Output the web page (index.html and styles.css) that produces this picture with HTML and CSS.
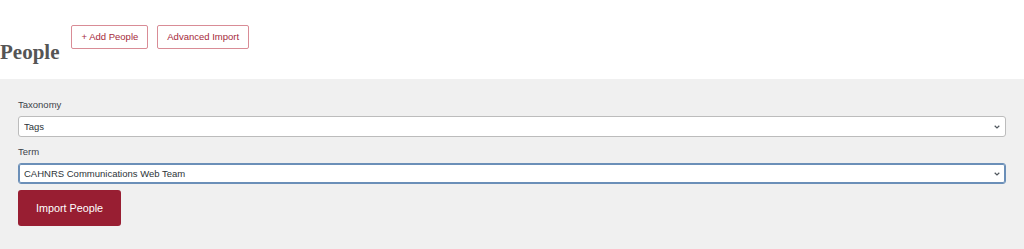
FILE: index.html
```html
<!DOCTYPE html>
<html>
<head>
  <title>People</title>
  <link rel="stylesheet" href="styles.css">
</head>
<body>
  <div class="page-header">
    <h1>People</h1>
    <a class="title-action" href="#">+ Add People</a>
    <a class="title-action" href="#">Advanced Import</a>
  </div>

  <div class="import-panel">
    <div class="form-group">
      <label for="taxonomy">Taxonomy</label>
      <div class="select-wrap">
        <select id="taxonomy">
          <option>Tags</option>
        </select>
        <svg class="chevron" width="6" height="4" viewBox="0 0 6 4"><path d="M0.7 0.8l2.3 2.2 2.3-2.2" fill="none" stroke="#50575e" stroke-width="1.2"/></svg>
      </div>
    </div>

    <div class="form-group">
      <label for="term">Term</label>
      <div class="select-wrap">
        <select id="term" class="focused">
          <option>CAHNRS Communications Web Team</option>
        </select>
        <svg class="chevron" width="6" height="4" viewBox="0 0 6 4"><path d="M0.7 0.8l2.3 2.2 2.3-2.2" fill="none" stroke="#50575e" stroke-width="1.2"/></svg>
      </div>
    </div>

    <button class="import-btn">Import People</button>
  </div>
</body>
</html>
```

FILE: styles.css
```css
body {
  margin: 0;
  font-family: "Liberation Sans", Arial, sans-serif;
  background-color: #fff;
  color: #3c434a;
}
.page-header {
  display: flex;
  align-items: flex-start;
  height: 54px;
  padding-top: 25px;
}
h1 {
  margin: 15px 12px 0 0;
  font-family: "Liberation Serif", serif;
  font-size: 21px;
  line-height: 24px;
  font-weight: bold;
  color: #555;
}
.title-action {
  display: inline-block;
  height: 22px;
  line-height: 22px;
  padding: 0 9px;
  margin-right: 9px;
  border: 1px solid #d98c96;
  border-radius: 2px;
  font-size: 9.5px;
  color: #a52a3b;
  text-decoration: none;
}
.import-panel {
  background-color: #f0f0f0;
  padding: 19px 18px 23px 18px;
  min-height: 130px;
}
.form-group {
  margin-bottom: 8px;
}
label {
  display: block;
  font-size: 9.5px;
  line-height: 13px;
  margin-bottom: 5px;
  color: #3c434a;
}
.select-wrap {
  position: relative;
}
select {
  display: block;
  width: 100%;
  height: 21px;
  padding: 0 24px 0 5px;
  border: 1px solid #bcbcbc;
  border-radius: 3px;
  background-color: #fff;
  font-family: "Liberation Sans", Arial, sans-serif;
  font-size: 9.5px;
  color: #2c3338;
  -webkit-appearance: none;
  appearance: none;
  outline: none;
}
select.focused {
  border-color: #6b8fb8;
  box-shadow: inset 0 0 0 1px #6b8fb8;
}
.chevron {
  position: absolute;
  right: 6px;
  top: 9px;
  pointer-events: none;
}
.import-btn {
  display: block;
  margin-top: -2px;
  width: 103px;
  height: 36px;
  border: none;
  border-radius: 3px;
  background-color: #981e32;
  color: #fff;
  font-family: "Liberation Sans", Arial, sans-serif;
  font-size: 10.8px;
  cursor: pointer;
}
```
